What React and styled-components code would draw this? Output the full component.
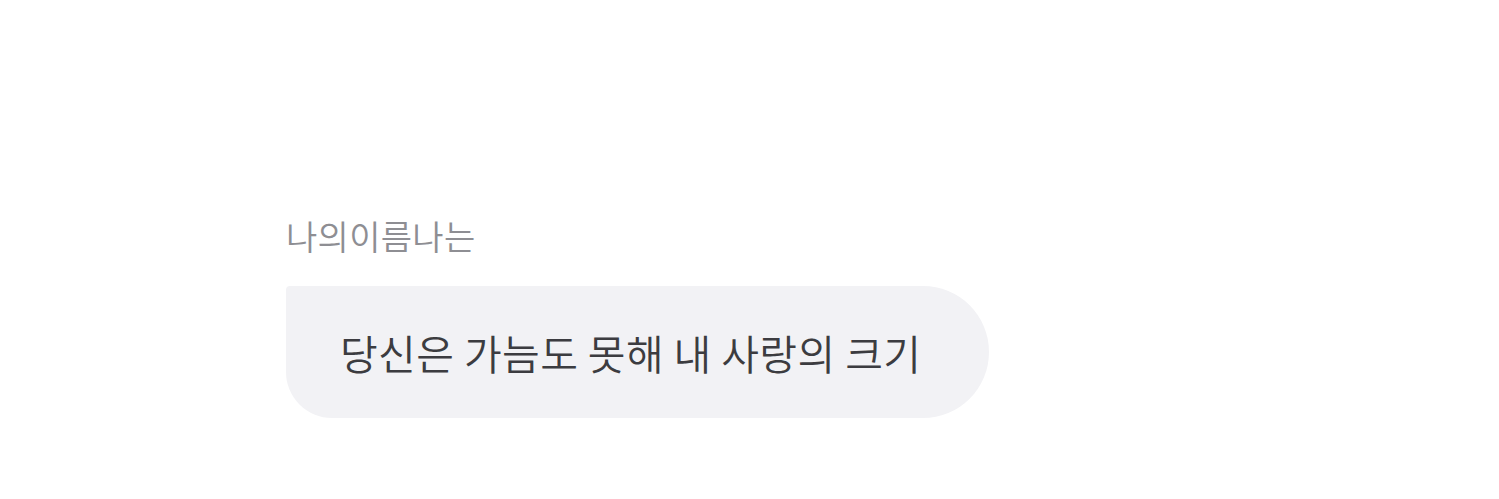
import React from "react";
import styled, { createGlobalStyle } from "styled-components";

const Global = createGlobalStyle`
  html, body { margin: 0; padding: 0; background: #ffffff; }
  body { font-family: "Noto Sans CJK KR", "Noto Sans", sans-serif; }
`;

const Page = styled.div`
  width: 1499px;
  height: 499px;
  box-sizing: border-box;
  padding: 212px 0 0 286px;
  background: #ffffff;
`;

const Message = styled.div`
  display: flex;
  flex-direction: column;
  align-items: flex-start;
  gap: 26px;
`;

const Sender = styled.div`
  font-size: 34px;
  line-height: 48px;
  font-weight: 350;
  letter-spacing: 0.3px;
  color: #8e8e93;
`;

const Bubble = styled.div`
  display: flex;
  align-items: center;
  height: 132px;
  box-sizing: border-box;
  padding: 0 68px 0 54px;
  background: #f2f2f5;
  border-radius: 4px 66px 66px 46px;
  font-size: 41px;
  font-weight: 350;
  letter-spacing: 0.4px;
  color: #3c3c40;
`;

export default function App() {
  return (
    <>
      <Global />
      <Page>
        <Message>
          <Sender>나의이름나는</Sender>
          <Bubble>당신은 가늠도 못해 내 사랑의 크기</Bubble>
        </Message>
      </Page>
    </>
  );
}
